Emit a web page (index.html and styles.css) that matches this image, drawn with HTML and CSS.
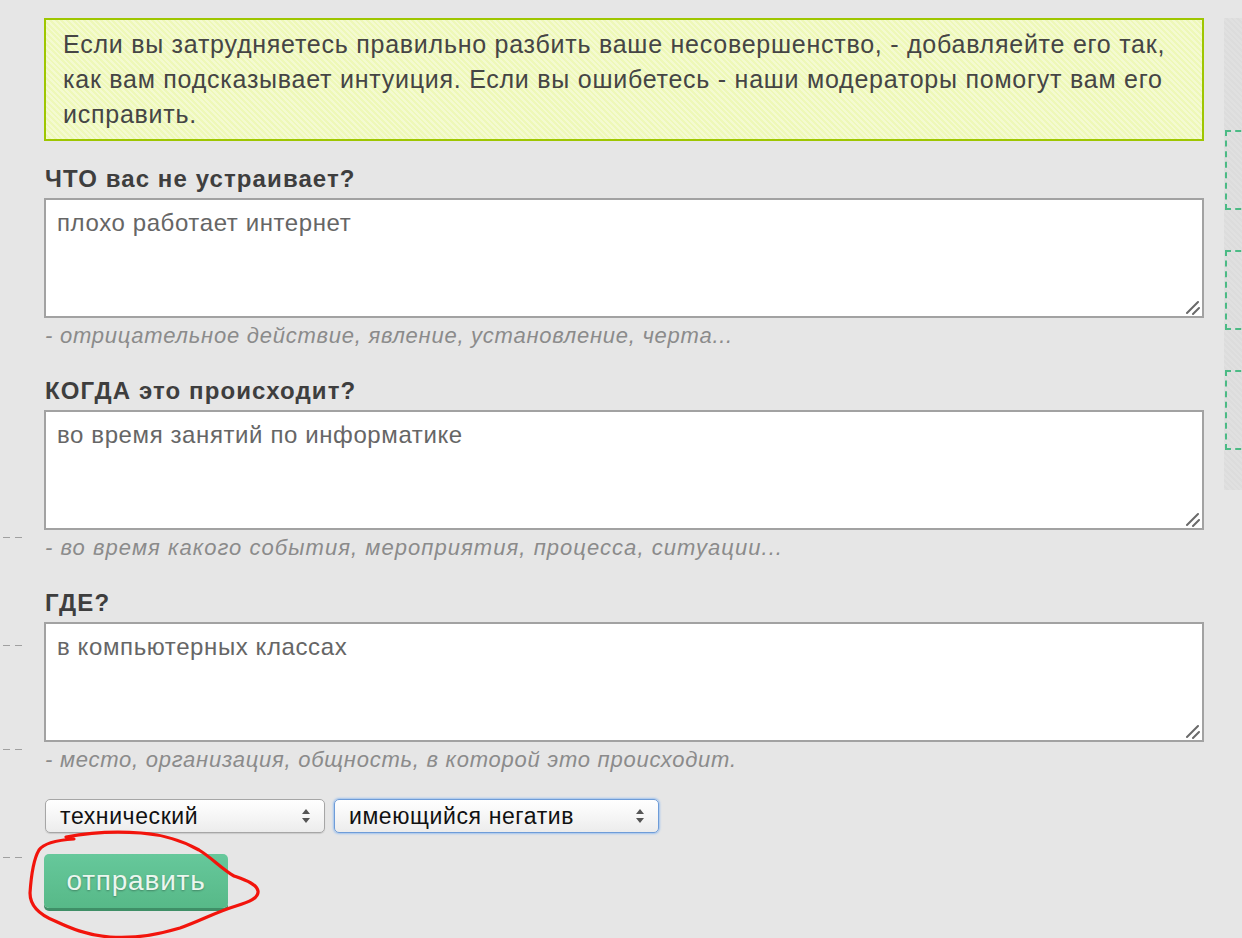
FILE: index.html
```html
<!DOCTYPE html>
<html lang="ru">
<head>
<meta charset="utf-8">
<title>Несовершенство</title>
<link rel="stylesheet" href="styles.css">
</head>
<body>
<div class="page">
  <div class="gutter">
    <span class="dash"></span>
    <span class="dash dash-2"></span>
    <span class="dash dash-3"></span>
    <span class="dash dash-4"></span>
  </div>
  <main class="main">
    <div class="notice">Если вы затрудняетесь правильно разбить ваше несовершенство, - добавляейте его так,<br>как вам подсказывает интуиция. Если вы ошибетесь - наши модераторы помогут вам его<br>исправить.</div>

    <section class="field">
      <label class="label">ЧТО вас не устраивает?</label>
      <div class="input-wrap">
        <textarea class="input">плохо работает интернет</textarea>
        <svg class="grip" width="16" height="16" viewBox="0 0 16 16"><path d="M2 14 L13 3 M8 15 L14 9" stroke="#6a6a6a" stroke-width="2" stroke-linecap="round"/></svg>
      </div>
      <p class="hint">- отрицательное действие, явление, установление, черта...</p>
    </section>

    <section class="field">
      <label class="label">КОГДА это происходит?</label>
      <div class="input-wrap">
        <textarea class="input">во время занятий по информатике</textarea>
        <svg class="grip" width="16" height="16" viewBox="0 0 16 16"><path d="M2 14 L13 3 M8 15 L14 9" stroke="#6a6a6a" stroke-width="2" stroke-linecap="round"/></svg>
      </div>
      <p class="hint hint-wide">- во время какого события, мероприятия, процесса, ситуации...</p>
    </section>

    <section class="field">
      <label class="label">ГДЕ?</label>
      <div class="input-wrap">
        <textarea class="input">в компьютерных классах</textarea>
        <svg class="grip" width="16" height="16" viewBox="0 0 16 16"><path d="M2 14 L13 3 M8 15 L14 9" stroke="#6a6a6a" stroke-width="2" stroke-linecap="round"/></svg>
      </div>
      <p class="hint">- место, организация, общность, в которой это происходит.</p>
    </section>

    <div class="selects">
      <div class="select select-type">
        <span>технический</span>
        <svg class="arrows" width="8" height="14" viewBox="0 0 8 14"><path d="M4 0 L8 5 L0 5 Z M0 9 L8 9 L4 14 Z" fill="#555"/></svg>
      </div>
      <div class="select select-kind is-focused">
        <span>имеющийся негатив</span>
        <svg class="arrows" width="8" height="14" viewBox="0 0 8 14"><path d="M4 0 L8 5 L0 5 Z M0 9 L8 9 L4 14 Z" fill="#555"/></svg>
      </div>
    </div>

    <div class="submit-wrap">
      <button class="submit" type="button">отправить</button>
      <svg class="scribble" width="252" height="112" viewBox="14 829 252 112">
        <path d="M74,839 C58,840 44,843 39,850 C33,860 31,878 30,893 C30,906 40,915 55,921 C70,928 86,935 110,937 C135,939 160,934 180,928 C200,921 216,912 236,906 C249,902 259,898 258,891 C257,884 245,880 234,876 C222,869 212,858 199,850 C185,842 166,835 141,833 C116,831 92,832 66,837" fill="none" stroke="#f2140c" stroke-width="3.2" stroke-linecap="round" stroke-linejoin="round"/>
      </svg>
    </div>
  </main>
  <aside class="sidebar">
    <div class="slot"></div>
    <div class="slot"></div>
    <div class="slot"></div>
  </aside>
</div>
</body>
</html>
```

FILE: styles.css
```css
html, body {
  margin: 0;
  padding: 0;
}
body {
  background: #e6e6e6;
  font-family: "Liberation Sans", Arial, Helvetica, sans-serif;
  color: #444;
  width: 1242px;
  height: 938px;
  overflow: hidden;
}
.page {
  display: flex;
  align-items: flex-start;
  width: 1242px;
}
.gutter {
  width: 44px;
  flex: none;
  display: flex;
  flex-direction: column;
  padding-top: 537px;
}
.dash {
  display: block;
  margin-left: 3px;
  width: 19px;
  height: 1px;
  background: linear-gradient(to right, #a0a0a0 0 7px, transparent 7px 12px, #a0a0a0 12px 19px);
}
.dash-2 { margin-top: 107px; }
.dash-3 { margin-top: 103px; }
.dash-4 { margin-top: 107px; }

.main {
  width: 1160px;
  flex: none;
  padding-top: 18px;
}
.notice {
  border: 2px solid #9ec600;
  background-color: #eef8b8;
  background-image: repeating-linear-gradient(45deg, rgba(255,255,255,0.35) 0 2px, rgba(255,255,255,0) 2px 4px);
  padding: 7px 17px;
  font-size: 25px;
  letter-spacing: 0.75px;
  line-height: 35px;
  color: #454545;
  white-space: nowrap;
}
.field {
  display: flex;
  flex-direction: column;
}
.label {
  display: block;
  margin: 26px 0 7px 1px;
  font-size: 24px;
  letter-spacing: 1.1px;
  line-height: 24px;
  font-weight: bold;
  color: #3e3e3e;
}
.input-wrap {
  position: relative;
}
.input {
  display: block;
  box-sizing: border-box;
  width: 1160px;
  height: 120px;
  margin: 0;
  border: 2px solid #a2a2a2;
  background: #fff;
  padding: 10px 11px;
  font-family: "Liberation Sans", Arial, sans-serif;
  font-size: 24px;
  letter-spacing: 0.6px;
  line-height: 26px;
  color: #666;
  resize: none;
  outline: none;
}
.grip {
  position: absolute;
  right: 3px;
  bottom: 3px;
  pointer-events: none;
}
.hint {
  margin: 7px 0 6px 1px;
  font-size: 22px;
  letter-spacing: 0.75px;
  line-height: 22px;
  font-style: italic;
  color: #8b8b8b;
}
.hint-wide {
  letter-spacing: 1.05px;
}
.selects {
  display: flex;
  gap: 9px;
  margin: 22px 0 0 1px;
}
.select {
  box-sizing: border-box;
  height: 34px;
  display: flex;
  align-items: center;
  justify-content: space-between;
  padding: 0 14px 0 14px;
  border: 1px solid #a6a6a6;
  border-radius: 5px;
  background: linear-gradient(#ffffff, #f6f6f6 50%, #ececec);
  box-shadow: 0 1px 1px rgba(0,0,0,0.12);
  font-size: 23px;
  letter-spacing: 0.6px;
  color: #111;
}
.select-type { width: 280px; }
.select-kind { width: 325px; }
.select.is-focused {
  border-color: #6e9cd8;
  box-shadow: 0 0 2px 1px #9fc2ee;
}
.arrows { flex: none; }

.submit-wrap {
  position: relative;
  margin-top: 21px;
  width: 184px;
}
.submit {
  display: block;
  width: 184px;
  height: 54px;
  border: none;
  border-radius: 5px;
  background: linear-gradient(#66c89b, #57b988);
  box-shadow: 0 3px 0 #3f8f67;
  color: #eaf6ee;
  font-family: "Liberation Sans", Arial, sans-serif;
  font-size: 28px;
  letter-spacing: 0.8px;
  text-shadow: 0 1px 2px rgba(0,0,0,0.3);
  padding: 0;
  cursor: pointer;
}
.scribble {
  position: absolute;
  left: -30px;
  top: -25px;
}

.sidebar {
  flex: 1;
  min-width: 0;
  overflow: hidden;
  margin-left: 20px;
  margin-top: 18px;
  height: 472px;
  background-color: #dcdcdc;
  background-image: repeating-linear-gradient(45deg, rgba(255,255,255,0.12) 0 2px, rgba(255,255,255,0) 2px 4px);
  display: flex;
  flex-direction: column;
  gap: 40px;
  padding-top: 112px;
  box-sizing: border-box;
}
.slot {
  flex: none;
  margin-left: 1px;
  width: 200px;
  height: 80px;
  box-sizing: border-box;
  border: 2px dashed #4cba85;
}
```
